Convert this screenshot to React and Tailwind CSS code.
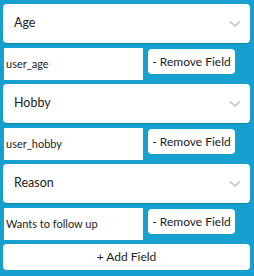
import React from 'react';

const fields = [
  { label: 'Age', value: 'user_age' },
  { label: 'Hobby', value: 'user_hobby' },
  { label: 'Reason', value: 'Wants to follow up' },
];

function Chevron() {
  return (
    <svg width="12" height="8" viewBox="0 0 12 8" className="shrink-0">
      <path d="M1 1.5 L6 6 L11 1.5" fill="none" stroke="#cccccc" strokeWidth="1.8" />
    </svg>
  );
}

export default function App() {
  return (
    <div
      className="w-[254px] h-[276px] bg-[#16a0cf] pt-[4px] pl-[3px] pr-[4px] flex flex-col text-[#222]"
      style={{ fontFamily: 'Lato, "Open Sans", sans-serif' }}
    >
      {fields.map((f, i) => (
        <div key={f.label} className={i > 0 ? 'mt-[4px]' : ''}>
          <div className="h-[39px] bg-white rounded-[4px] shadow-[0_1px_1px_rgba(0,0,0,0.2)] flex items-center pl-[11px] pr-[9px] justify-between">
            <span className="text-[12.5px]">{f.label}</span>
            <Chevron />
          </div>
          <div className="mt-[5px] flex items-start">
            <div className="ml-[1px] w-[139px] h-[32px] bg-white flex items-center pl-[2px] text-[11px]">
              {f.value}
            </div>
            <button className="ml-[5px] mt-[1px] w-[87px] h-[25px] bg-white rounded-[4px] text-[12px] flex items-center justify-center">
              - Remove Field
            </button>
          </div>
        </div>
      ))}
      <button className="mt-[4px] h-[26px] bg-white rounded-[4px] text-[12px] flex items-center justify-center">
        + Add Field
      </button>
    </div>
  );
}
